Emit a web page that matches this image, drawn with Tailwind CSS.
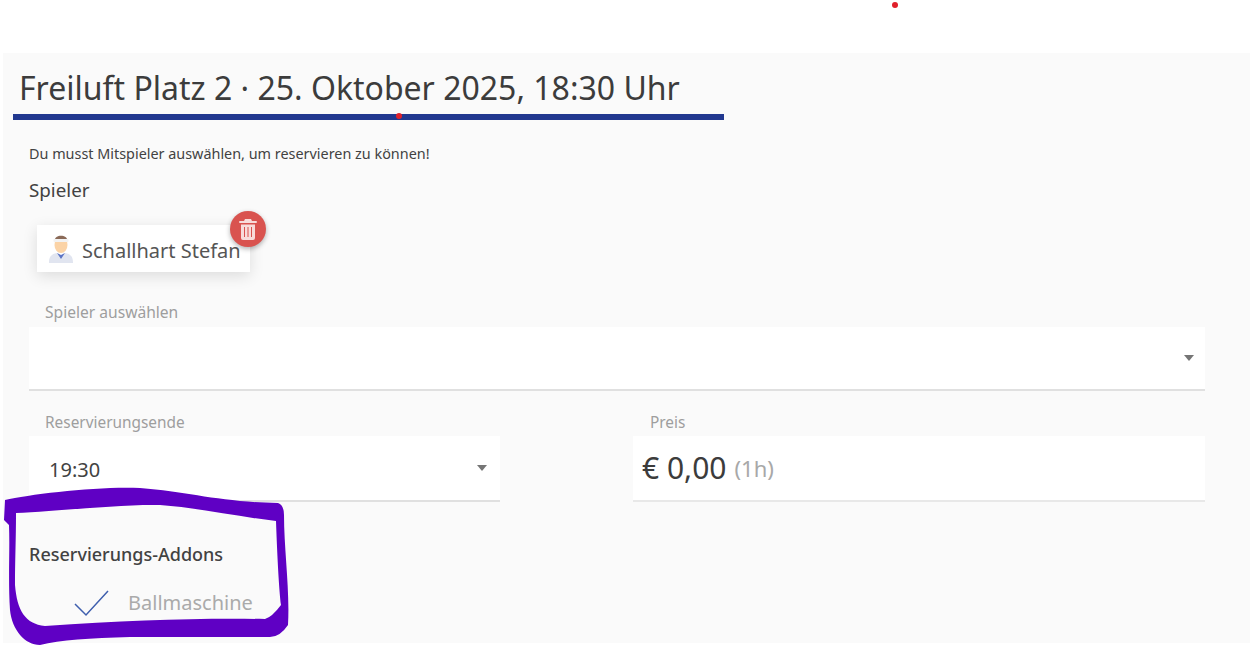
<!DOCTYPE html>
<html lang="de">
<head>
    <meta charset="UTF-8">
    <meta name="viewport" content="width=device-width, initial-scale=1.0">
    <title>Reservierung</title>
    <script src="https://cdn.jsdelivr.net/npm/@tailwindcss/browser@4"></script>
</head>
<body class="relative h-[647px] w-[1250px] overflow-hidden bg-white font-['Noto_Sans',sans-serif] text-[#424242]">
    <!-- red dots from the screen recording -->
    <span class="absolute left-[892px] top-[2px] h-[6px] w-[6px] rounded-full bg-[#e0202a]"></span>

    <main class="ml-[3px] mt-[53px] h-[590px] w-[1247px] bg-[#fafafa]">
        <div class="relative ml-[10px] w-[711px] border-b-[6px] border-[#21388f] pb-[6px] pl-[6px] pt-[15px]">
            <h1 class="whitespace-nowrap text-[32px] leading-[40px] text-[#3c3c3c]">Freiluft Platz 2 · 25. Oktober 2025, 18:30 Uhr</h1>
            <span class="absolute bottom-[-5px] left-[383px] h-[6px] w-[6px] rounded-full bg-[#e0202a]"></span>
        </div>

        <div class="pl-[26px] pr-[45px]">
            <p class="mt-[25px] text-[14.400px] leading-[18px]">Du musst Mitspieler auswählen, um reservieren zu können!</p>
            <h2 class="mt-[15px] text-[18.800px] leading-[24px]">Spieler</h2>

            <div class="relative ml-[8px] mt-[23px] flex h-[47px] w-[213px] items-start bg-white pl-[10px] pt-[9px] shadow-[0_4px_14px_rgba(0,0,0,0.12)]">
                <svg class="h-[30px] w-[28px] shrink-0" viewBox="0 0 28 30">
                    <path d="M2 29c0-6 2-9 8-10l4 3 4-3c6 1 8 4 8 10z" fill="#e1e5f0"/>
                    <path d="M10 19l4 6 4-6-4 2z" fill="#5c74c4"/>
                    <ellipse cx="14" cy="11" rx="6.500" ry="8" fill="#fbd3a6"/>
                    <path d="M7.500 7c0-7 13-7 13 0z" fill="#8a6a58"/>
                    <rect x="6.500" y="5" width="15" height="3" rx="1" fill="#f2f2f2"/>
                </svg>
                <span class="ml-[7px] mt-[3px] whitespace-nowrap text-[20px] leading-[28px] text-[#555]">Schallhart Stefan</span>
                <button class="absolute right-[-16px] top-[-14px] flex h-[36px] w-[36px] items-center justify-center rounded-full bg-[#d9534f] shadow-[0_2px_5px_rgba(0,0,0,0.3)]">
                    <svg class="h-[22px] w-[18px]" viewBox="0 0 18 22" fill="#f8dcda">
                        <path d="M6 1h6l1 2h4a1 1 0 0 1 0 2H1a1 1 0 0 1 0-2h4z"/>
                        <path fill-rule="evenodd" d="M2 6.500h14V20a2 2 0 0 1-2 2H4a2 2 0 0 1-2-2zM5 9v10h1V9zM8.500 9v10h1V9zM12 9v10h1V9z"/>
                    </svg>
                </button>
            </div>

            <div class="mt-[29px]">
                <label class="ml-[16px] block text-[15.600px] leading-[22px] text-[#9e9e9e]">Spieler auswählen</label>
                <div class="mt-[4px] flex h-[64px] items-center justify-end border-b-2 border-[#e0e0e0] bg-white pr-[11px]">
                    <span class="h-0 w-0 border-x-[5px] border-t-[6px] border-x-transparent border-t-[#757575]"></span>
                </div>
            </div>

            <div class="mt-[21px] flex justify-between">
                <div class="w-[471px]">
                    <label class="ml-[16px] block text-[15.400px] leading-[22px] text-[#9e9e9e]">Reservierungsende</label>
                    <div class="mt-[2px] flex h-[66px] items-center justify-between border-b-2 border-[#e0e0e0] bg-white pl-[20px] pr-[13px]">
                        <span class="mt-[4px] text-[20px] leading-[26px]">19:30</span>
                        <span class="h-0 w-0 border-x-[5px] border-t-[6px] border-x-transparent border-t-[#757575]"></span>
                    </div>
                </div>
                <div class="w-[572px]">
                    <label class="ml-[17px] block text-[15.400px] leading-[22px] text-[#9e9e9e]">Preis</label>
                    <div class="mt-[2px] flex h-[66px] items-center border-b-2 border-[#e8e8e8] bg-white pl-[9px]">
                        <span class="text-[30px] leading-[36px] text-[#3c3c3c]">€ 0,00</span>
                        <span class="ml-[8px] text-[22px] leading-[36px] text-[#a8a8a8]">(1h)</span>
                    </div>
                </div>
            </div>

            <h2 class="mt-[39px] text-[18px] font-medium leading-[26px]">Reservierungs-Addons</h2>
            <div class="ml-[45px] mt-[22px] flex items-center">
                <svg class="h-[28px] w-[36px]" viewBox="0 0 36 28" fill="none" stroke="#3f5fae" stroke-width="1.500">
                    <path d="M1 15l11 11L34 2"/>
                </svg>
                <span class="ml-[18px] text-[20px] leading-[28px] text-[#aaa]">Ballmaschine</span>
            </div>
        </div>
    </main>

    <!-- purple marker drawn over the screenshot -->
    <svg class="absolute left-0 top-0" width="1250" height="647" viewBox="0 0 1250 647">
        <path fill="#5f00c4" fill-rule="evenodd" d="M5 500C30 494 100 486 140 488C190 492 220 502 278 503Q284 505 284 515C284 550 290 590 288 625Q280 637 270 637L130 637C90 638 60 640 40 645C25 645 12 630 10 610C8 580 10 550 9 525L4 520ZM16 513C50 512 120 504 160 505C200 508 240 517 276 521C277 550 279 590 281 605Q272 617 265 619C200 618 130 620 45 626C25 624 17 610 15 585C15 560 16 540 16 513Z"/>
    </svg>
</body>
</html>
